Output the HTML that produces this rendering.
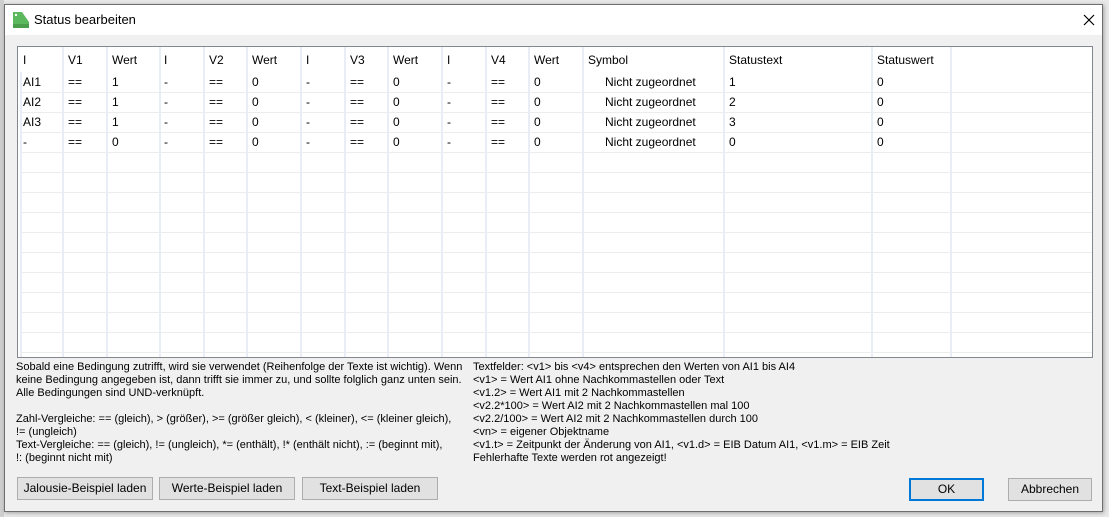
<!DOCTYPE html>
<html><head><meta charset="utf-8"><style>
*{margin:0;padding:0;box-sizing:border-box}
body{width:1109px;height:517px;overflow:hidden;background:#e8e8e8;font-family:"Liberation Sans",sans-serif;font-size:12px;color:#000;position:relative}
.a{position:absolute;white-space:nowrap}
#dlg{position:absolute;left:4px;top:4px;width:1099px;height:508px;background:#f0f0f0;border:1px solid #6f6f6f;box-shadow:1px 1px 4px rgba(0,0,0,.3)}
#title{position:absolute;left:0;top:0;width:100%;height:30px;background:#fff}
#grid{position:absolute;left:12px;top:41px;width:1076px;height:312px;background:#fff;border:1px solid #828790;overflow:hidden}
.rows{position:absolute;left:2px;right:0;top:45px;bottom:0;background:repeating-linear-gradient(to bottom,#ececec 0,#ececec 1px,transparent 1px,transparent 20px)}
.v{position:absolute;top:0;bottom:0;width:2px;background:#e9eef6}
.btn{position:absolute;height:23px;border:1px solid #adadad;background:#e1e1e1;text-align:center;line-height:21px}
</style></head><body>
<div class="a" style="left:0;top:0;width:4px;height:517px;background:#cfcfcf"></div>
<div id="dlg">
 <div id="title">
  <svg class="a" style="left:8px;top:7px" width="16" height="16"><path d="M0 0H9L16 10V16H0Z" fill="#5cb85c"/><rect x="0" y="12" width="16" height="4" fill="#4a9d4a"/><circle cx="3" cy="3" r="1.2" fill="#fff"/></svg>
  <div class="a" style="left:29px;top:7px;font-size:13px">Status bearbeiten</div>
  <svg class="a" style="left:1078px;top:9px" width="12" height="12"><path d="M1 1L11 11M11 1L1 11" stroke="#000" stroke-width="1.2"/></svg>
 </div>
 <div id="grid">
  <div class="rows"></div>
  <div class="v" style="left:2px;top:25px"></div>
  <div class="v" style="left:44px"></div><div class="v" style="left:88px"></div><div class="v" style="left:141px"></div>
  <div class="v" style="left:185px"></div><div class="v" style="left:228px"></div><div class="v" style="left:282px"></div>
  <div class="v" style="left:326px"></div><div class="v" style="left:369px"></div><div class="v" style="left:423px"></div>
  <div class="v" style="left:467px"></div><div class="v" style="left:510px"></div><div class="v" style="left:564px"></div>
  <div class="v" style="left:705px"></div><div class="v" style="left:853px"></div><div class="v" style="left:932px"></div>
 </div>
</div>
<!-- header -->
<div class="a" style="left:23px;top:53px">I</div><div class="a" style="left:68px;top:53px">V1</div><div class="a" style="left:112px;top:53px">Wert</div>
<div class="a" style="left:164px;top:53px">I</div><div class="a" style="left:209px;top:53px">V2</div><div class="a" style="left:252px;top:53px">Wert</div>
<div class="a" style="left:306px;top:53px">I</div><div class="a" style="left:350px;top:53px">V3</div><div class="a" style="left:393px;top:53px">Wert</div>
<div class="a" style="left:447px;top:53px">I</div><div class="a" style="left:491px;top:53px">V4</div><div class="a" style="left:534px;top:53px">Wert</div>
<div class="a" style="left:588px;top:53px">Symbol</div><div class="a" style="left:729px;top:53px">Statustext</div><div class="a" style="left:877px;top:53px">Statuswert</div>
<!-- rows -->
<div class="a" style="left:23px;top:72px;line-height:20px">AI1<br>AI2<br>AI3<br>-</div>
<div class="a" style="left:68px;top:72px;line-height:20px">==<br>==<br>==<br>==</div>
<div class="a" style="left:112px;top:72px;line-height:20px">1<br>1<br>1<br>0</div>
<div class="a" style="left:164px;top:72px;line-height:20px">-<br>-<br>-<br>-</div>
<div class="a" style="left:209px;top:72px;line-height:20px">==<br>==<br>==<br>==</div>
<div class="a" style="left:252px;top:72px;line-height:20px">0<br>0<br>0<br>0</div>
<div class="a" style="left:306px;top:72px;line-height:20px">-<br>-<br>-<br>-</div>
<div class="a" style="left:350px;top:72px;line-height:20px">==<br>==<br>==<br>==</div>
<div class="a" style="left:393px;top:72px;line-height:20px">0<br>0<br>0<br>0</div>
<div class="a" style="left:447px;top:72px;line-height:20px">-<br>-<br>-<br>-</div>
<div class="a" style="left:491px;top:72px;line-height:20px">==<br>==<br>==<br>==</div>
<div class="a" style="left:534px;top:72px;line-height:20px">0<br>0<br>0<br>0</div>
<div class="a" style="left:605px;top:72px;line-height:20px">Nicht zugeordnet<br>Nicht zugeordnet<br>Nicht zugeordnet<br>Nicht zugeordnet</div>
<div class="a" style="left:729px;top:72px;line-height:20px">1<br>2<br>3<br>0</div>
<div class="a" style="left:877px;top:72px;line-height:20px">0<br>0<br>0<br>0</div>
<!-- help text -->
<div class="a" style="left:16px;top:361px;line-height:13px;font-size:11px">Sobald eine Bedingung zutrifft, wird sie verwendet (Reihenfolge der Texte ist wichtig). Wenn<br>keine Bedingung angegeben ist, dann trifft sie immer zu, und sollte folglich ganz unten sein.<br>Alle Bedingungen sind UND-verknüpft.<br><br>Zahl-Vergleiche: == (gleich), &gt; (größer), &gt;= (größer gleich), &lt; (kleiner), &lt;= (kleiner gleich),<br>!= (ungleich)<br>Text-Vergleiche: == (gleich), != (ungleich), *= (enthält), !* (enthält nicht), := (beginnt mit),<br>!: (beginnt nicht mit)</div>
<div class="a" style="left:473px;top:361px;line-height:13px;font-size:11px">Textfelder: &lt;v1&gt; bis &lt;v4&gt; entsprechen den Werten von AI1 bis AI4<br>&lt;v1&gt; = Wert AI1 ohne Nachkommastellen oder Text<br>&lt;v1.2&gt; = Wert AI1 mit 2 Nachkommastellen<br>&lt;v2.2*100&gt; = Wert AI2 mit 2 Nachkommastellen mal 100<br>&lt;v2.2/100&gt; = Wert AI2 mit 2 Nachkommastellen durch 100<br>&lt;vn&gt; = eigener Objektname<br>&lt;v1.t&gt; = Zeitpunkt der Änderung von AI1, &lt;v1.d&gt; = EIB Datum AI1, &lt;v1.m&gt; = EIB Zeit<br>Fehlerhafte Texte werden rot angezeigt!</div>
<!-- buttons -->
<div class="btn" style="left:17px;top:477px;width:136px">Jalousie-Beispiel laden</div>
<div class="btn" style="left:159px;top:477px;width:136px">Werte-Beispiel laden</div>
<div class="btn" style="left:302px;top:477px;width:136px">Text-Beispiel laden</div>
<div class="btn" style="left:909px;top:478px;width:75px;border:2px solid #0078d7;line-height:19px">OK</div>
<div class="btn" style="left:1008px;top:478px;width:84px">Abbrechen</div>
</body></html>
